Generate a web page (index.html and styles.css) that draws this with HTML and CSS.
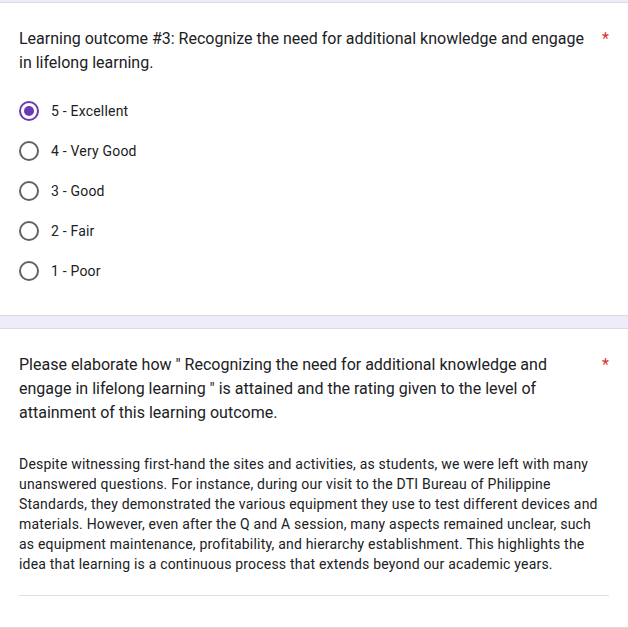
FILE: index.html
```html
<!DOCTYPE html>
<html>
<head>
<meta charset="utf-8">
<link rel="stylesheet" href="styles.css">
</head>
<body>
<div class="page">
  <section class="card card-first">
    <div class="q-title">
      <span class="q-text">Learning outcome #3: Recognize the need for additional knowledge and engage in lifelong learning.</span>
      <span class="req">*</span>
    </div>
    <div class="options">
      <div class="option"><span class="radio checked"></span><span class="label">5 - Excellent</span></div>
      <div class="option"><span class="radio"></span><span class="label">4 - Very Good</span></div>
      <div class="option"><span class="radio"></span><span class="label">3 - Good</span></div>
      <div class="option"><span class="radio"></span><span class="label">2 - Fair</span></div>
      <div class="option"><span class="radio"></span><span class="label">1 - Poor</span></div>
    </div>
  </section>
  <section class="card card-second">
    <div class="q-title">
      <span class="q-text">Please elaborate how " Recognizing the need for additional knowledge and engage in lifelong learning " is attained and the rating given to the level of attainment of this learning outcome.</span>
      <span class="req">*</span>
    </div>
    <div class="answer">Despite witnessing first-hand the sites and activities, as students, we were left with many unanswered questions. For instance, during our visit to the DTI Bureau of Philippine Standards, they demonstrated the various equipment they use to test different devices and materials. However, even after the Q and A session, many aspects remained unclear, such as equipment maintenance, profitability, and hierarchy establishment. This highlights the idea that learning is a continuous process that extends beyond our academic years.</div>
    <div class="underline"></div>
  </section>
</div>
</body>
</html>
```
FILE: styles.css
```css
html, body {
  margin: 0;
  padding: 0;
  background: #f0ebf8;
  font-family: Roboto, "Liberation Sans", sans-serif;
  color: #202124;
}
.page {
  padding-top: 2px;
  display: flex;
  flex-direction: column;
  gap: 12px;
}
.card {
  background: #fff;
  border-top: 1px solid #dadce0;
  border-bottom: 1px solid #dadce0;
  padding: 24px 19px;
}
.card-first {
  height: 264px;
}
.card-second {
  height: 250px;
}
.q-title {
  display: flex;
  align-items: flex-start;
  font-size: 16px;
  line-height: 24px;
  letter-spacing: 0;
}
.q-text {
  flex: 1;
  padding-right: 10px;
}
.req {
  color: #d93025;
  width: 9px;
  text-align: right;
}
.options {
  margin-top: 16px;
  display: flex;
  flex-direction: column;
}
.option {
  height: 40px;
  display: flex;
  align-items: center;
  font-size: 14px;
  letter-spacing: 0.2px;
}
.radio {
  box-sizing: border-box;
  width: 20px;
  height: 20px;
  border: 2px solid #5f6368;
  border-radius: 50%;
  margin-right: 12px;
  display: flex;
  align-items: center;
  justify-content: center;
}
.radio.checked {
  border-color: #673ab7;
}
.radio.checked::after {
  content: "";
  width: 10px;
  height: 10px;
  border-radius: 50%;
  background: #673ab7;
}
.answer {
  margin-top: 29px;
  font-size: 14px;
  line-height: 20px;
  letter-spacing: 0.2px;
  padding-right: 10px;
}
.underline {
  margin-top: 21px;
  height: 1px;
  background: #e0e0e0;
}
```
